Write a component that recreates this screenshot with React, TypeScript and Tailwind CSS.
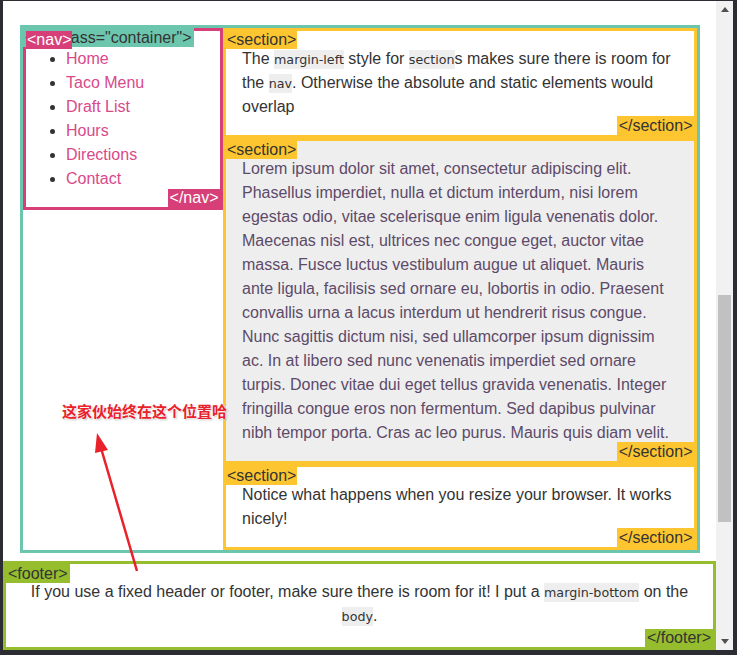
import React from "react";

const F = "font-['Liberation_Sans',Arial,sans-serif]";

function Code({ children }: { children: React.ReactNode }) {
  return (
    <code className="font-['DejaVu_Sans',sans-serif] text-[12.7px] leading-none bg-[#eeeeee] py-[2px]">
      {children}
    </code>
  );
}

export default function App() {
  return (
    <div className={`relative w-[737px] h-[655px] bg-[#2b2d32] flex pt-px pl-[3px] pr-[4px] pb-[5px] ${F} text-[16px] text-[#333]`}>
      {/* viewport */}
      <div className="relative w-[713px] h-[649px] bg-white overflow-hidden">
        <div className="pt-[24px]">
          <div className="relative ml-[17px] w-[680px] border-[3px] border-[#6cc5ad] bg-white">
            {/* nav */}
            <nav className="absolute top-0 left-0 w-[200px] border-[3px] border-[#d63f78] bg-white">
              <ul className="list-disc my-4 pl-10 leading-6">
                {["Home", "Taco Menu", "Draft List", "Hours", "Directions", "Contact"].map((t) => (
                  <li key={t}>
                    <a className="text-[#d9498a]">{t}</a>
                  </li>
                ))}
              </ul>
              <span className="absolute top-0 left-0 z-30 bg-[#d63f78] text-white px-[1px] leading-[18px]">&lt;nav&gt;</span>
              <span className="absolute bottom-0 right-0 bg-[#d63f78] text-white px-[1.5px] leading-[18px]">&lt;/nav&gt;</span>
            </nav>
            <span className="absolute top-0 left-0 z-20 bg-[#6cc5ad] text-[#333] px-[2px] leading-[19px]">
              &lt;div class="container"&gt;
            </span>

            <section className="relative ml-[200px] border-[3px] border-[#fdc630] bg-white px-4">
              <span className="absolute top-0 left-0 bg-[#fdc630] px-[1px] leading-[18px]">&lt;section&gt;</span>
              <p className="my-4 leading-6">
                The <Code>margin-left</Code> style for <Code>section</Code>s makes sure there is room for the{" "}
                <Code>nav</Code>. Otherwise the absolute and static elements would overlap
              </p>
              <span className="absolute bottom-0 right-0 bg-[#fdc630] px-[1.5px] leading-[19px]">&lt;/section&gt;</span>
            </section>

            <section className="relative ml-[200px] border-[3px] border-[#fdc630] bg-[#eeeeee] px-4">
              <span className="absolute top-0 left-0 bg-[#fdc630] text-[#333] px-[1px] leading-[18px]">&lt;section&gt;</span>
              <p className="my-4 leading-6 text-[#5d4a69]">
                Lorem ipsum dolor sit amet, consectetur adipiscing elit. Phasellus imperdiet, nulla et dictum interdum, nisi
                lorem egestas odio, vitae scelerisque enim ligula venenatis dolor. Maecenas nisl est, ultrices nec congue
                eget, auctor vitae massa. Fusce luctus vestibulum augue ut aliquet. Mauris ante ligula, facilisis sed ornare
                eu, lobortis in odio. Praesent convallis urna a lacus interdum ut hendrerit risus congue. Nunc sagittis dictum
                nisi, sed ullamcorper ipsum dignissim ac. In at libero sed nunc venenatis imperdiet sed ornare turpis. Donec
                vitae dui eget tellus gravida venenatis. Integer fringilla congue eros non fermentum. Sed dapibus pulvinar nibh
                tempor porta. Cras ac leo purus. Mauris quis diam velit.
              </p>
              <span className="absolute bottom-0 right-0 bg-[#fdc630] text-[#333] px-[1.5px] leading-[19px]">&lt;/section&gt;</span>
            </section>

            <section className="relative ml-[200px] border-[3px] border-[#fdc630] bg-white px-4">
              <span className="absolute top-0 left-0 bg-[#fdc630] px-[1px] leading-[18px]">&lt;section&gt;</span>
              <p className="my-4 leading-6">Notice what happens when you resize your browser. It works nicely!</p>
              <span className="absolute bottom-0 right-0 bg-[#fdc630] px-[1.5px] leading-[19px]">&lt;/section&gt;</span>
            </section>
          </div>
        </div>

        {/* fixed footer */}
        <footer className="absolute bottom-0 left-0 right-0 h-[89px] border-[3px] border-[#95bd2e] bg-white">
          <span className="absolute top-0 left-0 bg-[#95bd2e] px-[2px] leading-[19px]">&lt;footer&gt;</span>
          <p className="mt-4 px-4 text-center leading-6">
            If you use a fixed header or footer, make sure there is room for it! I put a <Code>margin-bottom</Code> on
            the <Code>body</Code>.
          </p>
          <span className="absolute bottom-0 right-0 bg-[#95bd2e] px-[2px] leading-[18px]">&lt;/footer&gt;</span>
        </footer>
      </div>

      {/* scrollbar */}
      <div className="w-[17px] h-[649px] bg-[#f1f1f1] flex flex-col">
        <div className="h-[17px] flex items-center justify-center">
          <svg width="8" height="5" viewBox="0 0 8 5">
            <polygon points="0,5 8,5 4,0" fill="#505050" />
          </svg>
        </div>
        <div className="mt-[277px] mx-[2px] h-[227px] bg-[#c1c1c1]" />
        <div className="flex-1" />
        <div className="h-[17px] flex items-center justify-center">
          <svg width="8" height="5" viewBox="0 0 8 5">
            <polygon points="0,0 8,0 4,5" fill="#505050" />
          </svg>
        </div>
      </div>

      {/* annotation */}
      <div className="absolute left-[62px] top-[402px] z-40 font-['Noto_Sans_CJK_SC',sans-serif] font-bold text-[15px] leading-[18px] text-[#e8212b] [text-shadow:0_0_2px_#fff,0_0_2px_#fff,0_0_2px_#fff,1px_1px_2px_rgba(0,0,0,0.35)]">
        这家伙始终在这个位置哈
      </div>
      <svg className="absolute left-0 top-0 z-40 pointer-events-none" width="737" height="655" viewBox="0 0 737 655">
        <line x1="137" y1="571" x2="101" y2="448" stroke="#e8212b" strokeWidth="2.5" />
        <polygon points="97,433 108,450 95,453" fill="#e8212b" />
      </svg>
    </div>
  );
}
